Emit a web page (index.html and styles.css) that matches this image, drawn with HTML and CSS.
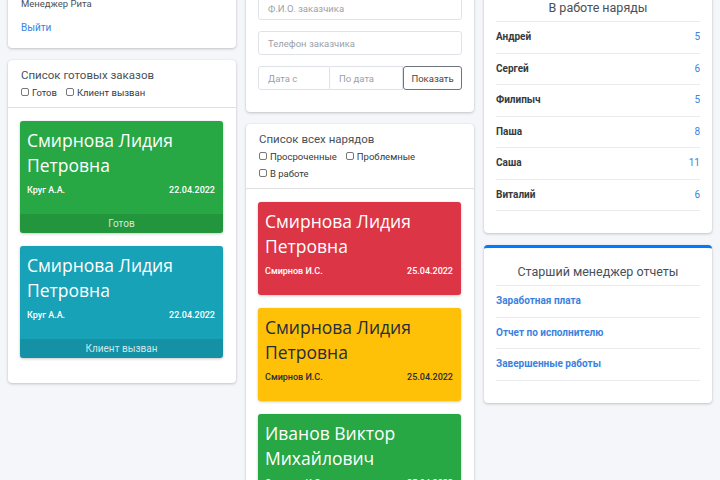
FILE: index.html
```html
<!DOCTYPE html>
<html lang="ru">
<head>
<meta charset="utf-8">
<title>Наряды</title>
<link rel="stylesheet" href="styles.css">
</head>
<body>
<div class="page">
  <div class="col">
    <div class="card">
      <div class="card-body user-body">
        <div class="user-role">Менеджер Рита</div>
        <a class="logout" href="#">Выйти</a>
      </div>
    </div>
    <div class="card">
      <div class="card-header">
        <div class="card-title">Список готовых заказов</div>
        <div class="checks">
          <label class="check"><input type="checkbox"><span>Готов</span></label>
          <label class="check"><input type="checkbox"><span>Клиент вызван</span></label>
        </div>
      </div>
      <div class="card-body list-body">
        <div class="box bg-green">
          <div class="inner">
            <div class="box-name">Смирнова Лидия Петровна</div>
            <div class="box-info"><span>Круг А.А.</span><span>22.04.2022</span></div>
          </div>
          <div class="box-footer">Готов</div>
        </div>
        <div class="box bg-teal">
          <div class="inner">
            <div class="box-name">Смирнова Лидия Петровна</div>
            <div class="box-info"><span>Круг А.А.</span><span>22.04.2022</span></div>
          </div>
          <div class="box-footer">Клиент вызван</div>
        </div>
      </div>
    </div>
  </div>

  <div class="col">
    <div class="card">
      <div class="card-body form-body">
        <input class="field" type="text" placeholder="Ф.И.О. заказчика">
        <input class="field" type="text" placeholder="Телефон заказчика">
        <div class="input-group">
          <input class="field field-from" type="text" placeholder="Дата с">
          <input class="field field-to" type="text" placeholder="По дата">
          <button class="btn" type="button">Показать</button>
        </div>
      </div>
    </div>
    <div class="card">
      <div class="card-header">
        <div class="card-title">Список всех нарядов</div>
        <div class="checks">
          <label class="check"><input type="checkbox"><span>Просроченные</span></label>
          <label class="check"><input type="checkbox"><span>Проблемные</span></label>
          <label class="check"><input type="checkbox"><span>В работе</span></label>
        </div>
      </div>
      <div class="card-body list-body">
        <div class="box bg-red">
          <div class="inner">
            <div class="box-name">Смирнова Лидия Петровна</div>
            <div class="box-info"><span>Смирнов И.С.</span><span>25.04.2022</span></div>
          </div>
        </div>
        <div class="box bg-yellow">
          <div class="inner">
            <div class="box-name">Смирнова Лидия Петровна</div>
            <div class="box-info"><span>Смирнов И.С.</span><span>25.04.2022</span></div>
          </div>
        </div>
        <div class="box bg-green">
          <div class="inner">
            <div class="box-name">Иванов Виктор Михайлович</div>
            <div class="box-info"><span>Смирнов И.С.</span><span>25.04.2022</span></div>
          </div>
        </div>
      </div>
    </div>
  </div>

  <div class="col">
    <div class="card">
      <div class="card-body side-body">
        <div class="side-title">В работе наряды</div>
        <ul class="side-list">
          <li><b>Андрей</b><a href="#">5</a></li>
          <li><b>Сергей</b><a href="#">6</a></li>
          <li><b>Филипыч</b><a href="#">5</a></li>
          <li><b>Паша</b><a href="#">8</a></li>
          <li><b>Саша</b><a href="#">11</a></li>
          <li><b>Виталий</b><a href="#">6</a></li>
        </ul>
      </div>
    </div>
    <div class="card card-outline">
      <div class="card-body side-body">
        <div class="side-title">Старший менеджер отчеты</div>
        <ul class="side-list">
          <li><a class="report" href="#">Заработная плата</a></li>
          <li><a class="report" href="#">Отчет по исполнителю</a></li>
          <li><a class="report" href="#">Завершенные работы</a></li>
        </ul>
      </div>
    </div>
  </div>
</div>
</body>
</html>
```

FILE: styles.css
```css
html, body {
  margin: 0;
  padding: 0;
  overflow: hidden;
  background: #f4f6f9;
}

body {
  font-family: Roboto, "Noto Sans", sans-serif;
  color: #212529;
}

.page {
  display: grid;
  grid-template-columns: repeat(3, 228px);
  column-gap: 10px;
  padding: 0 8px;
  margin-top: -16px;
  align-items: start;
}

.card {
  background: #fff;
  border-radius: 4px;
  box-shadow: 0 0 1px rgba(0, 0, 0, .125), 0 1px 3px rgba(0, 0, 0, .2);
  margin-bottom: 12px;
}

.card-outline {
  border-top: 3px solid #007bff;
}

.card-body {
  display: flow-root;
  padding: 12px;
}

.user-body {
  padding: 12px 13px 14px;
}

.user-role {
  font-size: 9.5px;
  line-height: 16px;
  color: #495057;
}

.logout {
  display: block;
  margin-top: 10px;
  font-size: 10px;
  line-height: 12px;
  color: #3b82e0;
  text-decoration: none;
}

.card-header {
  padding: 7px 13px 6px;
  border-bottom: 1px solid rgba(0, 0, 0, .125);
}

.card-title {
  font-size: 11.5px;
  line-height: 16.5px;
  color: #495057;
}

.checks {
  display: flex;
  flex-wrap: wrap;
  column-gap: 9px;
  font-size: 9.5px;
  line-height: 17px;
  color: #343a40;
}

.check {
  display: inline-flex;
  align-items: center;
}

.check input {
  appearance: none;
  -webkit-appearance: none;
  width: 8px;
  height: 8px;
  margin: 0 3px 0 0;
  border: 1px solid #777;
  border-radius: 2px;
  background: #fff;
}

.list-body {
  padding: 13px 13px 12px 12px;
}

.box {
  border-radius: 3px;
  box-shadow: 0 0 1px rgba(0, 0, 0, .125), 0 1px 3px rgba(0, 0, 0, .2);
  margin-bottom: 13px;
  color: #fff;
  overflow: hidden;
}

.inner {
  padding: 7px 8px 18px 7px;
}

.box-name {
  font-family: "Open Sans", "Noto Sans", sans-serif;
  font-size: 17.5px;
  line-height: 25px;
}

.box-info {
  display: flex;
  justify-content: space-between;
  margin-top: 6px;
  font-size: 9px;
  line-height: 12px;
  font-weight: 500;
}

.box-footer {
  background: rgba(0, 0, 0, .1);
  text-align: center;
  font-size: 10px;
  line-height: 19px;
  color: rgba(255, 255, 255, .8);
}

.bg-green { background: #28a745; }
.bg-teal { background: #17a2b8; }
.bg-red { background: #dc3545; }
.bg-yellow { background: #ffc107; color: #1f2d3d; }

.form-body {
  padding: 12px 12px 11px;
}

.field {
  display: block;
  box-sizing: border-box;
  width: 100%;
  height: 24px;
  margin: 0 0 11px;
  padding: 0 9px;
  border: 1px solid #dfe3e8;
  border-radius: 3px;
  font-family: inherit;
  font-size: 9.5px;
  color: #495057;
  background: #fff;
  outline: none;
}

.field::placeholder {
  color: #9aa1a8;
}

.input-group {
  display: flex;
  margin-bottom: 11px;
}

.input-group .field {
  margin: 0;
}

.field-from {
  width: 72px;
  border-radius: 3px 0 0 3px;
}

.field-to {
  width: 73px;
  border-left: 0;
  border-radius: 0;
}

.btn {
  flex: 1;
  height: 24px;
  padding: 0;
  border: 1px solid #6c757d;
  border-radius: 3px;
  background: #fff;
  font-family: inherit;
  font-size: 9.5px;
  color: #444;
}

.side-title {
  font-size: 12.5px;
  line-height: 24px;
  text-align: center;
  color: #495057;
}

.side-list {
  list-style: none;
  margin: 1px 0 10px;
  padding: 0;
  border-top: 1px solid #e9ecef;
}

.side-list li {
  display: flex;
  justify-content: space-between;
  padding: 8px 0;
  border-bottom: 1px solid #e9ecef;
  font-size: 10px;
  line-height: 14.5px;
}

.side-list b {
  color: #343a40;
}

.side-list a {
  color: #3b82e0;
  text-decoration: none;
}

.side-list a.report {
  font-weight: 700;
}
```
